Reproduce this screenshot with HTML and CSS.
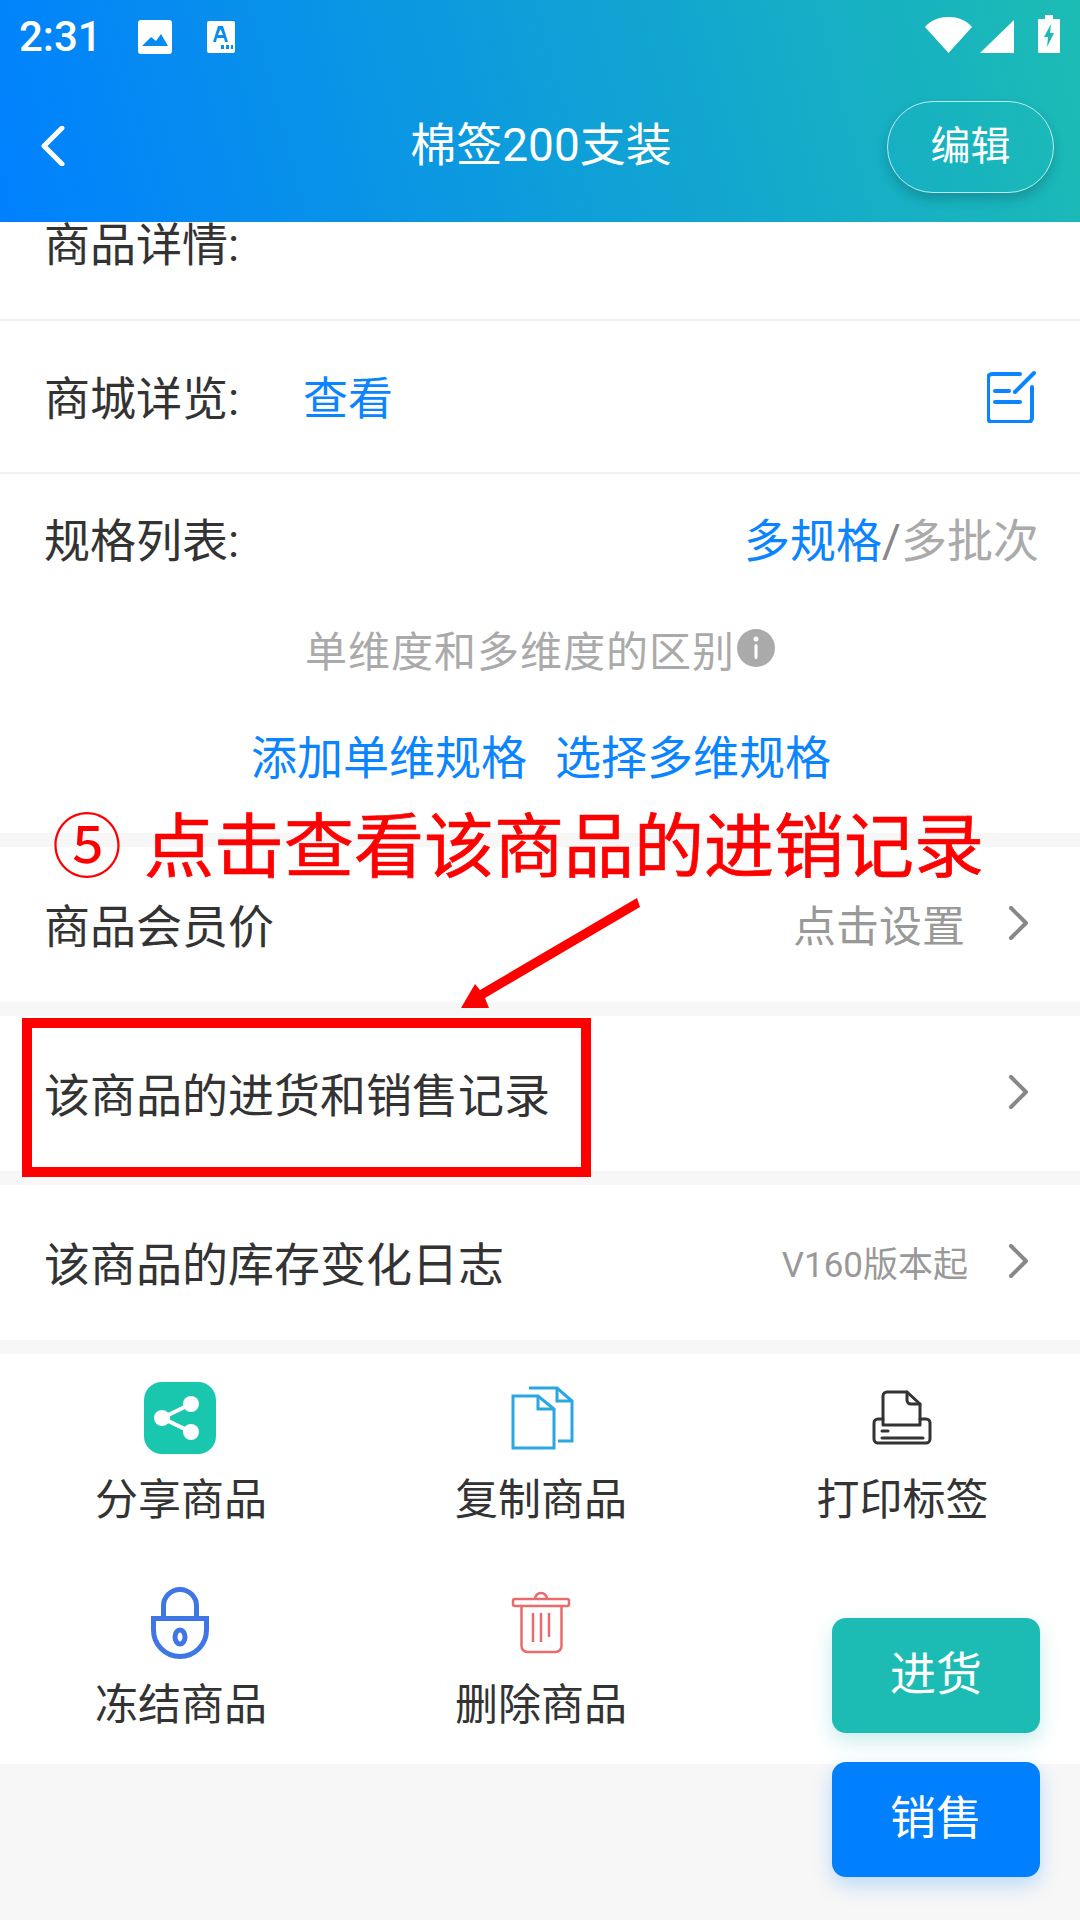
FILE: index.html
```html
<!DOCTYPE html>
<html lang="zh-CN">
<head>
<meta charset="utf-8">
<title>棉签200支装</title>
<link rel="stylesheet" href="styles.css">
</head>
<body>
<div class="page">
  <header class="header">
    <div class="status">
      <div class="status-left">
        <span class="clock">2:31</span>
        <svg class="ic-image" viewBox="0 0 34 34"><path fill="#fff" fill-rule="evenodd" d="M3 0H31a3 3 0 0 1 3 3V31a3 3 0 0 1-3 3H3a3 3 0 0 1-3-3V3a3 3 0 0 1 3-3ZM4 26H30L23 14 18 21 13 17Z"/></svg>
        <svg class="ic-a" viewBox="0 0 28 32"><path fill="#fff" fill-rule="evenodd" d="M2 0H26a2 2 0 0 1 2 2V30a2 2 0 0 1-2 2H2a2 2 0 0 1-2-2V2a2 2 0 0 1 2-2ZM11 5 6 21H9L10 17H17L18 21H21L16 5ZM11 14 13.500 8 16 14ZM14 24V28H17V24ZM19 24V28H22V24ZM24 24V28H26V24Z"/></svg>
      </div>
      <div class="status-right">
        <svg class="ic-wifi" viewBox="0 0 47 36"><path fill="#fff" d="M0 10C6 3 14 0 23.500 0S41 3 47 10L23.500 36Z"/></svg>
        <svg class="ic-signal" viewBox="0 0 34 33"><path fill="#fff" d="M34 0V33H0Z"/></svg>
        <svg class="ic-battery" viewBox="0 0 22 38"><path fill="#fff" fill-rule="evenodd" d="M7 0H15V4H21a1 1 0 0 1 1 1V37a1 1 0 0 1-1 1H1a1 1 0 0 1-1-1V5a1 1 0 0 1 1-1H7ZM13 9 6 22H10L9 32 16 18H12Z"/></svg>
      </div>
    </div>
    <div class="toolbar">
      <svg class="back" viewBox="0 0 24 40"><path d="M21 2 3 20 21 38" fill="none" stroke="#fff" stroke-width="5" stroke-linecap="round" stroke-linejoin="round"/></svg>
      <h1 class="title">棉签200支装</h1>
      <button class="edit-btn">编辑</button>
    </div>
  </header>

  <main class="content">
    <section class="block">
      <div class="row-clipped"><span class="label">商品详情:</span></div>
      <div class="row row-line">
        <span class="label label-fixed">商城详览:</span>
        <span class="link link-view">查看</span>
        <svg class="ic-edit" viewBox="0 0 49 53"><g fill="none" stroke="#0a84ff" stroke-width="4" stroke-linecap="round" stroke-linejoin="round"><path d="M33 4H5a4 4 0 0 0-4 4V48a4 4 0 0 0 4 4H41a4 4 0 0 0 4-4V17"/><path d="M28 22 47 3"/><path d="M8 21H22"/><path d="M8 32H33"/></g></svg>
      </div>
      <div class="spec">
        <div class="spec-head">
          <span class="label">规格列表:</span>
          <span class="spec-type"><span class="link">多规格</span><span class="slash">/</span><span class="muted">多批次</span></span>
        </div>
        <div class="spec-note">
          <span>单维度和多维度的区别</span>
          <svg class="ic-info" viewBox="0 0 38 38"><circle cx="19" cy="19" r="19" fill="#aaa"/><circle cx="19" cy="10" r="2.500" fill="#fff"/><rect x="17.500" y="15" width="3" height="15" rx="1.500" fill="#fff"/></svg>
        </div>
        <div class="spec-actions"><span class="link">添加单维规格</span><span class="link">选择多维规格</span></div>
      </div>
    </section>

    <section class="block row">
      <span class="label">商品会员价</span>
      <span class="value">点击设置</span>
      <svg class="chev" viewBox="0 0 21 34"><path d="M4 2 19 17 4 32" fill="none" stroke="#888" stroke-width="4" stroke-linecap="round" stroke-linejoin="round"/></svg>
    </section>
    <section class="block row">
      <span class="label">该商品的进货和销售记录</span>
      <svg class="chev" viewBox="0 0 21 34"><path d="M4 2 19 17 4 32" fill="none" stroke="#888" stroke-width="4" stroke-linecap="round" stroke-linejoin="round"/></svg>
    </section>
    <section class="block row">
      <span class="label">该商品的库存变化日志</span>
      <span class="value value-small">V160版本起</span>
      <svg class="chev" viewBox="0 0 21 34"><path d="M4 2 19 17 4 32" fill="none" stroke="#888" stroke-width="4" stroke-linecap="round" stroke-linejoin="round"/></svg>
    </section>

    <section class="block actions">
      <div class="action">
        <svg class="action-icon" viewBox="0 0 72 72"><rect width="72" height="72" rx="18" fill="#19c6ae"/><path d="M47 22 18 36 47 50" fill="none" stroke="#fff" stroke-width="4"/><circle cx="47" cy="22" r="8" fill="#fff"/><circle cx="18" cy="36" r="8" fill="#fff"/><circle cx="47" cy="50" r="8" fill="#fff"/></svg>
        <span>分享商品</span>
      </div>
      <div class="action">
        <svg class="action-icon" viewBox="0 0 72 72"><g fill="none" stroke="#29a7e1" stroke-width="3"><path d="M25 6H53L68 19V59H54"/><path d="M53 6V19H68"/><path d="M9 14H34L50 27V66H9Z"/><path d="M34 14V27H50"/></g></svg>
        <span>复制商品</span>
      </div>
      <div class="action">
        <svg class="action-icon" viewBox="0 0 72 72"><g fill="none" stroke="#333" stroke-width="3" stroke-linejoin="round" stroke-linecap="round"><path d="M19 37H14a4 4 0 0 0-4 4V57a4 4 0 0 0 4 4H62a4 4 0 0 0 4-4V41a4 4 0 0 0-4-4H56"/><path d="M19 43V14a4 4 0 0 1 4-4H43L56 22V43Z"/><path d="M43 10V18a4 4 0 0 0 4 4H56"/><path d="M18 49H24"/><path d="M18 56H59"/></g></svg>
        <span class="action-shift">打印标签</span>
      </div>
      <div class="action">
        <svg class="action-icon" viewBox="0 0 72 72"><g fill="none" stroke="#3f76e6" stroke-width="5"><path d="M9.500 31.500H62.500V43A26.500 26.500 0 0 1 9.500 43Z"/><path d="M19.500 31V19A16.500 16.500 0 0 1 52.500 19V31"/><ellipse cx="36" cy="50" rx="5" ry="7"/></g></svg>
        <span>冻结商品</span>
      </div>
      <div class="action">
        <svg class="action-icon" viewBox="0 0 72 72"><g fill="none" stroke="#ea6b6b" stroke-width="2.500"><rect x="9" y="12" width="56" height="7" rx="2"/><path d="M31 12a6 6 0 0 1 12 0"/><path d="M17.500 19V59a6 6 0 0 0 6 6H51.500a6 6 0 0 0 6-6V19"/><path d="M29 26V55M37 26V55M45 26V50"/></g></svg>
        <span>删除商品</span>
      </div>
    </section>
  </main>

  <button class="fab fab-in">进货</button>
  <button class="fab fab-out">销售</button>

  <div class="note"><span class="note-num">⑤</span><span class="note-text">点击查看该商品的进销记录</span></div>
  <svg class="note-arrow" viewBox="455 890 190 125"><polygon fill="#ff0000" points="461,1008 475,984 480,990 637,898 640,907 485,998 489,1008"/></svg>
  <div class="note-box"></div>
</div>
</body>
</html>
```
FILE: styles.css
```css
* { box-sizing: border-box; }
html, body { margin: 0; padding: 0; }
body {
  width: 1080px;
  height: 1920px;
  overflow: hidden;
  font-family: Roboto, "Noto Sans CJK SC", sans-serif;
  color: #333;
  background: #f7f7f7;
}
.page { position: relative; width: 1080px; height: 1920px; overflow: hidden; }

.header {
  height: 222px;
  display: flex;
  flex-direction: column;
  background: linear-gradient(75deg, #0080ff 0%, #1cbcb4 100%);
  color: #fff;
}
.status {
  height: 72px;
  padding: 15px 20px 0 19px;
  display: flex;
  justify-content: space-between;
  align-items: flex-start;
}
.status-left { display: flex; align-items: center; }
.clock { font-size: 42px; font-weight: 500; line-height: 44px; width: 119px; }
.ic-image { width: 34px; height: 34px; margin-right: 35px; }
.ic-a { width: 28px; height: 32px; }
.status-right { display: flex; align-items: flex-end; height: 38px; }
.ic-wifi { width: 47px; height: 36px; margin-right: 8px; }
.ic-signal { width: 34px; height: 33px; margin-right: 24px; }
.ic-battery { width: 22px; height: 38px; }

.toolbar {
  flex: 1;
  padding: 29px 26px 29px 28px;
  display: grid;
  grid-template-columns: 1fr auto 1fr;
  align-items: center;
}
.back { width: 24px; height: 40px; margin: 0 0 3px 13px; }
.title { margin: 0 0 5px; font-size: 46px; font-weight: 400; line-height: 60px; }
.edit-btn {
  justify-self: end;
  width: 167px;
  height: 92px;
  padding: 0 0 8px;
  border: 1px solid rgba(255, 255, 255, .7);
  border-radius: 46px;
  background: transparent;
  color: #fff;
  font: inherit;
  font-size: 40px;
  box-shadow: 0 6px 12px rgba(0, 0, 0, .18);
}

.content { display: flex; flex-direction: column; gap: 14px; }
.block { background: #fff; }
.label { font-size: 46px; color: #333; white-space: nowrap; }
.link { color: #0a84ff; font-size: 46px; }
.link-view { font-size: 45px; margin-bottom: 3px; }
.row-clipped {
  height: 99px;
  padding: 0 44px;
  border-bottom: 2px solid #f2f2f2;
  overflow: hidden;
  line-height: 46px;
}
.row {
  height: 155px;
  padding: 0 52px 0 44px;
  display: flex;
  align-items: center;
}
.row > .label { margin-bottom: 3px; }
.row-line { height: 153px; border-bottom: 2px solid #f2f2f2; padding-right: 44px; }
.label-fixed { width: 259px; }
.ic-edit { width: 49px; height: 53px; margin-left: auto; }
.spec { height: 359px; padding: 0 41px 0 44px; }
.spec-head {
  height: 126px;
  display: flex;
  justify-content: space-between;
  align-items: center;
}
.slash { font-size: 46px; color: #888; }
.muted { font-size: 46px; color: #aaa; }
.spec-note {
  margin: 16px -41px 0 -44px;
  height: 64px;
  display: flex;
  justify-content: center;
  align-items: center;
  font-size: 42px;
  letter-spacing: 1px;
  color: #aaa;
}
.ic-info { width: 38px; height: 38px; margin-left: 2px; }
.spec-actions {
  margin: 48px -41px 0 -42px;
  display: flex;
  justify-content: center;
  gap: 28px;
  line-height: 60px;
}
.value { margin-left: auto; margin-right: 42px; font-size: 43px; color: #999; margin-bottom: 3px; }
.value-small { font-size: 35px; margin-right: 39px; }
.row > .label + .chev { margin-left: auto; }
.chev { width: 21px; height: 34px; flex: none; margin-top: -4px; }

.actions {
  display: grid;
  grid-template-columns: repeat(3, 360px);
  grid-auto-rows: 205px;
  height: 410px;
}
.action {
  padding-top: 28px;
  display: flex;
  flex-direction: column;
  align-items: center;
  font-size: 43px;
  line-height: 60px;
  color: #333;
}
.action span { margin-left: 2px; }
.action .action-shift { margin-left: 5px; }
.action-icon { width: 72px; height: 72px; margin-bottom: 16px; }

.fab {
  position: absolute;
  left: 832px;
  width: 208px;
  height: 115px;
  padding: 0 0 11px;
  border: 0;
  border-radius: 14px;
  color: #fff;
  font: inherit;
  font-size: 46px;
}
.fab-in { top: 1618px; background: #1cbcb4; box-shadow: 0 8px 20px rgba(28, 188, 180, .25); }
.fab-out { top: 1762px; background: #0080ff; box-shadow: 0 8px 20px rgba(0, 128, 255, .25); }

.note {
  position: absolute;
  left: 52px;
  top: 794px;
  display: flex;
  align-items: center;
  color: #ff0000;
  font-family: "Noto Sans CJK SC", sans-serif;
  font-weight: 400;
  line-height: 96px;
  white-space: nowrap;
}
.note-num { font-size: 70px; width: 92px; }
.note-text { font-size: 70px; -webkit-text-stroke: .7px #ff0000; }
.note-arrow { position: absolute; left: 455px; top: 890px; width: 190px; height: 125px; }
.note-box {
  position: absolute;
  left: 22px;
  top: 1018px;
  width: 569px;
  height: 159px;
  border: 10px solid #ff0000;
}
```
